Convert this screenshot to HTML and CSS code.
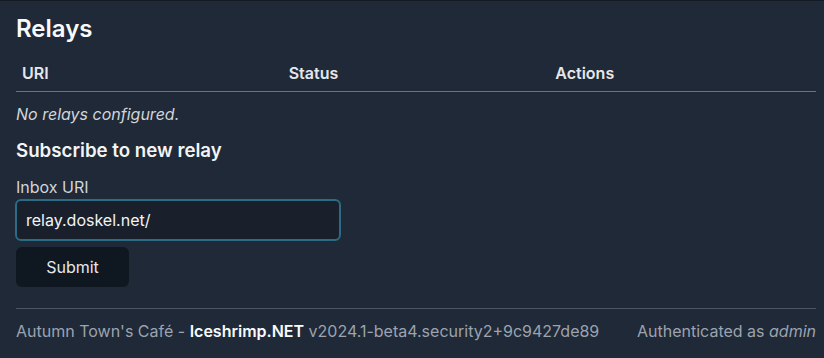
FILE: index.html
```html
<!DOCTYPE html>
<html>
<head>
<meta charset="utf-8">
<link rel="stylesheet" href="styles.css">
</head>
<body>
<div class="topline"></div>
<main class="page">
  <h2 class="title">Relays</h2>
  <table class="relays">
    <thead>
      <tr><th>URI</th><th>Status</th><th>Actions</th></tr>
    </thead>
  </table>
  <p class="empty">No relays configured.</p>
  <h3 class="subtitle">Subscribe to new relay</h3>
  <form class="form">
    <label class="label">Inbox URI</label>
    <input class="input" type="text" value="relay.doskel.net/">
    <button class="btn" type="button">Submit</button>
  </form>
  <hr class="sep">
  <footer class="footer">
    <span>Autumn Town's Café - <strong>Iceshrimp.NET</strong> v2024.1-beta4.security2+9c9427de89</span>
    <span>Authenticated as <em>admin</em></span>
  </footer>
</main>
</body>
</html>
```
FILE: styles.css
```css
html, body {
  margin: 0;
  padding: 0;
  background: #1f2937;
  color: #f3f4f6;
  font-family: Inter, "Noto Sans", sans-serif;
}
.topline {
  height: 1px;
  background: #141b25;
}
.page {
  padding: 0 8px 0 16px;
}
.title {
  margin: 0;
  padding-top: 14px;
  font-size: 24px;
  font-weight: 600;
  line-height: 28px;
  color: #f9fafb;
}
.relays {
  width: 800px;
  border-collapse: collapse;
  margin-top: 14px;
}
.relays th {
  width: 33.33%;
  text-align: left;
  font-size: 16px;
  font-weight: 600;
  padding: 6px 6px 8px;
  line-height: 20px;
  border-bottom: 1px solid #64748b;
  color: #e5e7eb;
}
.empty {
  margin: 12px 0 0;
  font-style: italic;
  font-size: 16px;
  line-height: 20px;
  color: #d1d5db;
}
.subtitle {
  margin: 16px 0 0;
  font-size: 18.7px;
  font-weight: 600;
  line-height: 22px;
  color: #f3f4f6;
}
.form {
  display: flex;
  flex-direction: column;
  align-items: flex-start;
  margin-top: 15px;
}
.label {
  font-size: 16px;
  line-height: 20px;
  color: #d1d5db;
}
.input {
  margin: 2px 0 0 -1px;
  box-sizing: border-box;
  width: 326px;
  height: 42px;
  padding: 0 9px;
  border: 2px solid #2b6b84;
  border-radius: 6px;
  background: #19202b;
  color: #f3f4f6;
  font-family: inherit;
  font-size: 16px;
  outline: none;
}
.btn {
  margin-top: 6px;
  width: 113px;
  height: 40px;
  border: none;
  border-radius: 6px;
  background: #0f1720;
  color: #e5e7eb;
  font-family: inherit;
  font-size: 16px;
}
.sep {
  margin: 21px 0 0;
  width: 800px;
  border: none;
  border-top: 1px solid #4b5563;
}
.footer {
  width: 800px;
  display: flex;
  justify-content: space-between;
  margin-top: 12px;
  font-size: 16px;
  line-height: 20px;
  color: #9ca3af;
}
.footer strong {
  color: #f9fafb;
  font-weight: 600;
}
```
